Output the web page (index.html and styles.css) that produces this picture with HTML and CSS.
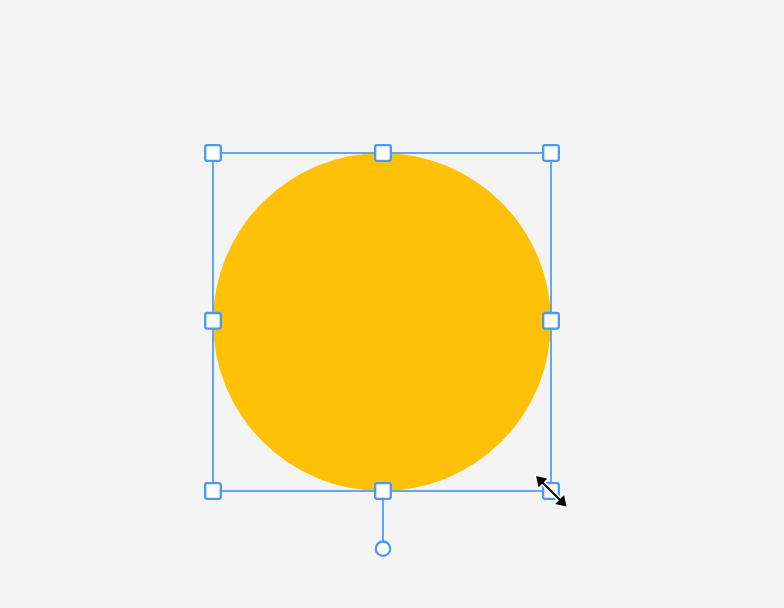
FILE: index.html
```html
<!DOCTYPE html>
<html lang="en">
<head>
<meta charset="utf-8">
<title>Canvas selection</title>
<link rel="stylesheet" href="styles.css">
</head>
<body>
<main class="canvas">
  <div class="shape"></div>
  <svg class="overlay" width="784" height="608" viewBox="0 0 784 608" aria-hidden="true">
    <rect class="frame" x="213" y="153" width="338" height="338"/>
    <line class="frame" x1="383" y1="499" x2="383" y2="542"/>
    <g class="handles">
      <rect x="205.2" y="145.2" width="15.6" height="15.6" rx="2"/>
      <rect x="375.2" y="145.2" width="15.6" height="15.6" rx="2"/>
      <rect x="543.2" y="145.2" width="15.6" height="15.6" rx="2"/>
      <rect x="205.2" y="313" width="15.6" height="15.6" rx="2"/>
      <rect x="543.2" y="313" width="15.6" height="15.6" rx="2"/>
      <rect x="205.2" y="483.2" width="15.6" height="15.6" rx="2"/>
      <rect x="375.2" y="483.2" width="15.6" height="15.6" rx="2"/>
      <rect x="543.2" y="483.2" width="15.6" height="15.6" rx="2"/>
      <circle cx="383" cy="548.7" r="7.2"/>
    </g>
    <polygon class="cursor" transform="translate(551.3 491.3) rotate(45)"
      points="-23,0 -11,-7.6 -11,-1.8 11,-1.8 11,-7.6 23,0 11,7.6 11,1.8 -11,1.8 -11,7.6"/>
  </svg>
</main>
</body>
</html>
```

FILE: styles.css
```css
html, body {
  margin: 0;
  padding: 0;
  background: #f4f4f4;
}

.canvas {
  position: relative;
  width: 784px;
  height: 608px;
  overflow: hidden;
  background: #f4f4f4;
}

.shape {
  position: absolute;
  left: 213px;
  top: 153px;
  width: 338px;
  height: 338px;
  border-radius: 50%;
  background: #ffc107;
}

.overlay {
  position: absolute;
  left: 0;
  top: 0;
}

.frame {
  fill: none;
  stroke: #4a98f7;
  stroke-width: 1.7;
}

.handles rect,
.handles circle {
  fill: #ffffff;
  stroke: #4a98f7;
  stroke-width: 2.3;
}

.cursor {
  fill: #000000;
  stroke: #ffffff;
  stroke-width: 1.5;
  stroke-linejoin: miter;
}
```
